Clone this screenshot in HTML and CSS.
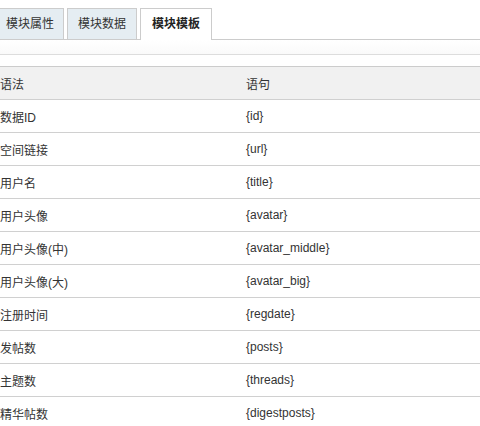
FILE: index.html
```html
<!DOCTYPE html>
<html>
<head>
  <meta charset="utf-8">
  <title>模块模板</title>
  <link rel="stylesheet" href="styles.css">
</head>
<body>

<div class="wrap">
  <ul class="tabs">
    <li class="tab">模块属性</li>
    <li class="tab">模块数据</li>
    <li class="tab active">模块模板</li>
  </ul>

  <div class="bar"></div>

  <table class="tpl">
    <thead>
      <tr><th class="c1">语法</th><th>语句</th></tr>
    </thead>
    <tbody>
      <tr><td class="c1">数据ID</td><td>{id}</td></tr>
      <tr><td class="c1">空间链接</td><td>{url}</td></tr>
      <tr><td class="c1">用户名</td><td>{title}</td></tr>
      <tr><td class="c1">用户头像</td><td>{avatar}</td></tr>
      <tr><td class="c1">用户头像(中)</td><td>{avatar_middle}</td></tr>
      <tr><td class="c1">用户头像(大)</td><td>{avatar_big}</td></tr>
      <tr><td class="c1">注册时间</td><td>{regdate}</td></tr>
      <tr><td class="c1">发帖数</td><td>{posts}</td></tr>
      <tr><td class="c1">主题数</td><td>{threads}</td></tr>
      <tr><td class="c1">精华帖数</td><td>{digestposts}</td></tr>
    </tbody>
  </table>
</div>

</body>
</html>
```

FILE: styles.css
```css
body {
  margin: 0;
  padding: 0;
  background: #fff;
  color: #333;
  font-family: Tahoma, "Liberation Sans", "Noto Sans CJK SC", sans-serif;
  font-size: 12px;
  overflow: hidden;
}

.wrap {
  margin-left: -5px;
  width: 500px;
  padding-top: 8px;
}

.tabs {
  list-style: none;
  margin: 0;
  padding: 0;
  display: flex;
  gap: 3px;
  border-bottom: 1px solid #ccc;
  height: 31px;
}

.tab {
  height: 30px;
  line-height: 30px;
  padding: 0 9px 0 10px;
  border: 1px solid #ccc;
  border-bottom: none;
  background: #e5edf2;
  color: #333;
  font-size: 12px;
}

.tab + .tab {
  padding: 0 10px;
}

.tab.active {
  height: 31px;
  background: #fff;
  font-weight: bold;
  padding: 0 11px;
  color: #222;
}

.bar {
  height: 14px;
  border-bottom: 1px solid #ddd;
  background: linear-gradient(#fff, #fafafa);
  margin-bottom: 11px;
}

.tpl {
  width: 100%;
  border-collapse: collapse;
}

.tpl th,
.tpl td {
  height: 32px;
  padding: 0 5px;
  text-align: left;
  font-weight: normal;
  border-bottom: 1px solid #d0d0d0;
  color: #333;
}

.tpl th {
  background: #f1f1f1;
  border-top: 1px solid #ccc;
}

.tpl .c1 {
  width: 236px;
}
```
